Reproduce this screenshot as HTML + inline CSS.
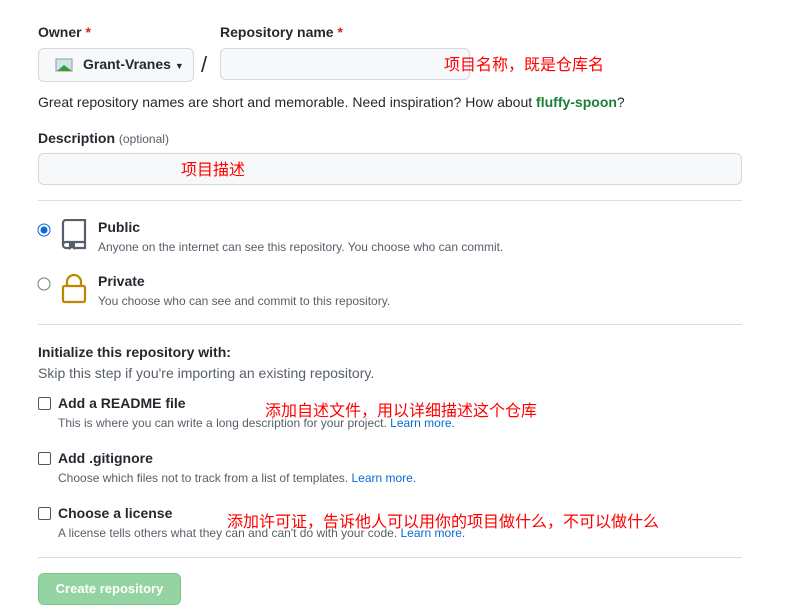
<!DOCTYPE html>
<html><head><meta charset="utf-8"><style>
body{margin:0;width:806px;height:609px;background:#fff;font-family:"Liberation Sans","Noto Sans CJK SC",sans-serif;color:#24292f;position:relative;overflow:hidden}
.a{position:absolute;white-space:nowrap}
.b{font-weight:bold;font-size:14px}
.s{font-size:12px;color:#57606a}
.r{color:#cf222e}
.cn{color:#f00;font-size:16px;font-family:"Noto Sans CJK SC",sans-serif;font-weight:normal;line-height:18px}
.inp{position:absolute;background:#f6f8fa;border:1px solid #d0d7de;border-radius:6px}
.hr{position:absolute;left:38px;width:704px;height:1px;background:#d8dee4}
.cb{position:absolute;width:11px;height:11px;border:1px solid #555;border-radius:2px;background:#fff}
a{color:#0969da;text-decoration:none}
</style></head><body>
<div class="a b" style="left:38px;top:24px">Owner <span class="r">*</span></div>
<div class="a b" style="left:220px;top:24px">Repository name <span class="r">*</span></div>
<div class="inp" style="left:38px;top:48px;width:154px;height:32px"></div>
<svg class="a" style="left:54px;top:56px" width="22" height="18"><rect x="2" y="3" width="16" height="12" fill="#cfe3ee" stroke="#999" stroke-width="1"/><path d="M3 15 L10 9 L18 15Z" fill="#3a9a3a"/></svg>
<div class="a b" style="left:83px;top:56px">Grant-Vranes <span style="font-size:9px">▼</span></div>
<div class="a" style="left:201px;top:52px;font-size:22px">/</div>
<div class="inp" style="left:220px;top:48px;width:248px;height:30px"></div>
<div class="a cn" style="left:444px;top:54px">项目名称，既是仓库名</div>
<div class="a" style="left:38px;top:94px;font-size:14px">Great repository names are short and memorable. Need inspiration? How about <b style="color:#1a7f37">fluffy-spoon</b>?</div>
<div class="a b" style="left:38px;top:130px">Description <span style="font-size:12px;color:#57606a;font-weight:normal">(optional)</span></div>
<div class="inp" style="left:38px;top:153px;width:702px;height:30px"></div>
<div class="a cn" style="left:181px;top:159px">项目描述</div>
<div class="hr" style="top:200px"></div>
<svg class="a" style="left:37px;top:223px" width="14" height="14"><circle cx="7" cy="7" r="6" fill="#fff" stroke="#0969da"/><circle cx="7" cy="7" r="3.5" fill="#0969da"/></svg>
<svg class="a" style="left:60px;top:219px" width="28" height="32"><path d="M3 4a3 3 0 0 1 3-3h19v22H6a3 3 0 0 0-3 3zM3 26a3 3 0 0 0 3 3h3M15 29h10v-6" fill="none" stroke="#57606a" stroke-width="2.2"/><path d="M9 24h6v7l-3-2-3 2z" fill="#57606a"/></svg>
<div class="a b" style="left:98px;top:219px">Public</div>
<div class="a s" style="left:98px;top:240px">Anyone on the internet can see this repository. You choose who can commit.</div>
<svg class="a" style="left:37px;top:277px" width="14" height="14"><circle cx="7" cy="7" r="6" fill="#fff" stroke="#777"/></svg>
<svg class="a" style="left:60px;top:273px" width="28" height="32"><path d="M7 13V9a7 7 0 0 1 14 0v4" fill="none" stroke="#bf8700" stroke-width="2.2"/><rect x="3" y="13" width="22" height="16" rx="1.5" fill="none" stroke="#bf8700" stroke-width="2.2"/></svg>
<div class="a b" style="left:98px;top:273px">Private</div>
<div class="a s" style="left:98px;top:294px">You choose who can see and commit to this repository.</div>
<div class="hr" style="top:324px"></div>
<div class="a b" style="left:38px;top:344px">Initialize this repository with:</div>
<div class="a" style="left:38px;top:365px;font-size:14px;color:#57606a">Skip this step if you're importing an existing repository.</div>
<div class="cb" style="left:38px;top:397px"></div>
<div class="a b" style="left:58px;top:395px">Add a README file</div>
<div class="a cn" style="left:265px;top:400px">添加自述文件，用以详细描述这个仓库</div>
<div class="a s" style="left:58px;top:416px">This is where you can write a long description for your project. <a>Learn more.</a></div>
<div class="cb" style="left:38px;top:452px"></div>
<div class="a b" style="left:58px;top:450px">Add .gitignore</div>
<div class="a s" style="left:58px;top:471px">Choose which files not to track from a list of templates. <a>Learn more.</a></div>
<div class="cb" style="left:38px;top:507px"></div>
<div class="a b" style="left:58px;top:505px">Choose a license</div>
<div class="a cn" style="left:227px;top:511px">添加许可证，告诉他人可以用你的项目做什么，不可以做什么</div>
<div class="a s" style="left:58px;top:526px">A license tells others what they can and can't do with your code. <a>Learn more.</a></div>
<div class="hr" style="top:557px"></div>
<div class="a" style="left:38px;top:573px;width:141px;height:30px;background:#94d3a2;border:1px solid #7cc48a;border-radius:6px;color:#fff;font-weight:bold;font-size:13px;text-align:center;line-height:30px">Create repository</div>
</body></html>
